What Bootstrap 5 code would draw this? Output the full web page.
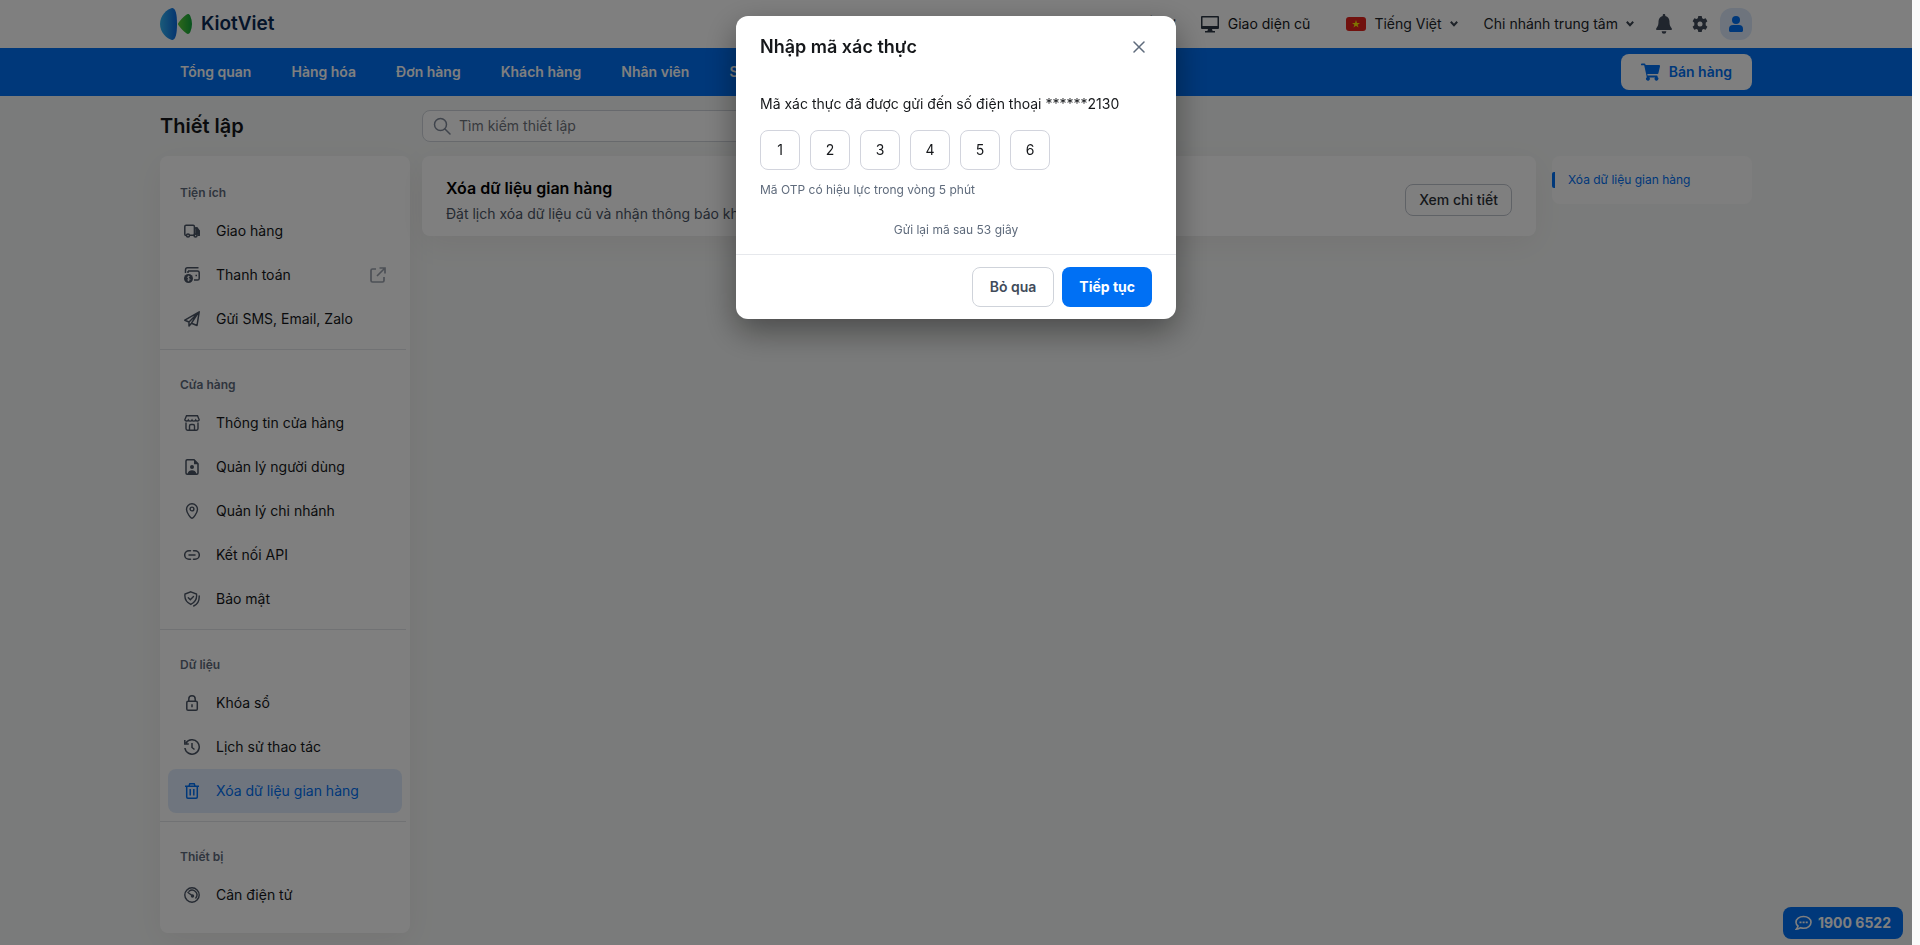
<!DOCTYPE html>
<html lang="vi">
<head>
<meta charset="utf-8">
<meta name="viewport" content="width=device-width, initial-scale=1">
<title>KiotViet - Thiết lập</title>
<link href="https://cdn.jsdelivr.net/npm/bootstrap@5.3.0/dist/css/bootstrap.min.css" rel="stylesheet">
<style>
:root{--kv-blue:#0070f4;--kv-text:#15171a;--kv-muted:#5f6b7c;--kv-line:#cfd3da;--kv-track:8px}
html{background:#fafafa}
body{font-family:Inter,"Noto Sans",sans-serif;font-size:14px;line-height:20px;color:var(--kv-text);background:#f5f7f6;margin-right:var(--kv-track);min-height:100vh}
a{text-decoration:none;color:inherit}
button{color:inherit}
svg{flex:none;display:block}
.kv-wrap{max-width:1592px;margin:0 auto}
.kv-top{background:#fff;height:48px}
.kv-brand{font-size:19px;font-weight:600;color:#0b2b55}
.kv-pick{font-size:14px;line-height:20px;padding:0;border:0}
.kv-help{margin-right:24px}
.kv-old{margin-right:36px}
.kv-lang{margin-right:26px}
.kv-bell{margin-left:22px}
.kv-user{width:32px;height:32px;border-radius:12px;background:#dce9fb;color:var(--kv-blue)}
.kv-nav{background:var(--kv-blue);height:48px}
.kv-nav .nav-link{padding:14px 20px;color:#fff;font-weight:600;line-height:20px}
.kv-sell{height:36px;padding:0 20px;border-radius:8px;background:#fff;color:var(--kv-blue);font-weight:600;border:0}
.kv-side{width:250px}
.kv-title{font-size:20px;line-height:32px;font-weight:600;margin:0}
.kv-head{gap:12px;padding:14px 0}
.kv-search{height:32px;width:400px;border:1px solid var(--kv-line);border-radius:8px;background:#fff;padding:0 10px;color:#7f8898}
.kv-search input{border:0;outline:0;background:none;font-size:14px;color:inherit}
.kv-search input::placeholder{color:#6f747c;opacity:1}
.kv-panel{background:#fff;border-radius:8px;box-shadow:0 8px 32px rgba(60,20,20,.06)}
.kv-menu{padding:2px 0 8px}
.kv-group{padding-bottom:8px;margin-right:4px}
.kv-group + .kv-group{border-top:1px solid #e2e4e8}
.kv-group h2{font-size:12px;line-height:20px;font-weight:600;color:var(--kv-muted);margin:0;padding:25px 20px 6px}
.kv-item{height:44px;margin:0 4px 0 8px;padding:0 15px 0 16px;gap:16px;border-radius:8px}
.kv-item > svg:first-child{color:#4a5464}
.kv-item.active{background:#dfebfc;color:var(--kv-blue)}
.kv-item.active > svg:first-child{color:var(--kv-blue)}
.kv-card h2{font-size:16px;line-height:24px;font-weight:600;margin:0;color:#000}
.kv-card p{margin:4px 0 0;color:#4a5464}
.kv-card{padding:20px 24px 10px;min-height:80px;margin:0 16px 0 12px}
.kv-btn{border:1px solid var(--kv-line);border-radius:8px;background:#fff;font-weight:600;color:#414b5a}
.kv-detail{height:32px;padding:0 13px;color:#2b3036;font-weight:500;border-color:#bfc4cd}
.kv-anchor{width:200px;background:#fdfdfd;border-radius:8px;padding:16px 0;font-size:12px;line-height:16px;color:var(--kv-blue)}
.kv-anchor a{border-left:3px solid var(--kv-blue);border-radius:2px 0 0 2px;padding-left:13px;display:block}
.kv-call{right:17px;bottom:6px;height:32px;padding:0 12px;gap:6px;border:0;border-radius:8px;background:var(--kv-blue);color:#fff;font-weight:700}
.kv-shade,.kv-modal{position:fixed;top:0;bottom:0;left:0;right:var(--kv-track);width:auto;height:auto}
.kv-shade{background:rgba(0,0,0,.5);z-index:1050}
.kv-modal{z-index:1055}
.kv-modal .modal-dialog{max-width:440px;margin:16px auto}
.kv-modal .modal-content{border:0;border-radius:12px;color:var(--kv-text);box-shadow:0 12px 32px rgba(0,0,0,.4)}
.kv-modal .modal-header{padding:19px 24px;border:0}
.kv-modal .modal-title{font-size:18px;line-height:24px;font-weight:600}
.kv-x{width:26px;height:24px;color:var(--kv-muted);border:0;background:none}
.kv-modal .modal-body{padding:16px 24px 14px}
.kv-otp{gap:10px;margin:16px 0 10px}
.kv-otp input{width:40px;height:40px;border:1px solid #d2d4dd;border-radius:8px;padding:0 0 2px;text-align:center;font-size:14px;color:var(--kv-text)}
.kv-note{font-size:12px;color:var(--kv-muted);margin:0}
.kv-resend{margin-top:20px}
.kv-modal .modal-footer{padding:12px 24px;gap:8px;border-top:1px solid #e6e8ec}
.kv-modal .modal-footer > *{margin:0;height:40px;padding:0 17px}
.kv-go{border:0;border-radius:8px;background:var(--kv-blue);color:#fff;font-weight:700}
</style>
</head>
<body>
<header class="kv-top">
  <div class="kv-wrap d-flex align-items-center h-100">
    <a href="#" class="d-flex align-items-center gap-2 me-auto">
      <svg width="33" height="32" viewBox="0 0 33 32"><defs><linearGradient id="lb"><stop stop-color="#35b5f2"/><stop offset="1" stop-color="#0a69df"/></linearGradient><linearGradient id="lg"><stop stop-color="#5cd036"/><stop offset="1" stop-color="#0fa43c"/></linearGradient></defs><path d="M12 0c3.500-.3 5 6 5 16s-1.500 16.300-5 16C7 31 0 24.500 0 16S7 1 12 0Z" fill="url(#lb)"/><path d="M18.300 15c2.200-3.200 5-6.300 8-8.300 1.500-1 3-.8 4 1.300 2.300 5 2.300 11 0 16-1 2.100-2.500 2.300-4 1.300-3-2-5.800-5.100-8-8.300-.5-.7-.5-1.300 0-2Z" fill="url(#lg)"/></svg>
      <span class="kv-brand">KiotViet</span>
    </a>
    <a href="#" class="kv-help">Hỗ trợ</a>
    <a href="#" class="kv-old d-flex align-items-center gap-2"><svg width="20" height="18" viewBox="0 0 20 18" fill="#2c3744"><path d="M2 1h16a1 1 0 0 1 1 1v11a1 1 0 0 1-1 1H2a1 1 0 0 1-1-1V2a1 1 0 0 1 1-1Zm.500 1.500v8.500h15V2.500z" fill-rule="evenodd"/><path d="M8 14h4l.6 2H15v1.500H5V16h2.400z"/></svg>Giao diện cũ</a>
    <button class="btn kv-pick kv-lang d-flex align-items-center gap-2"><svg width="20" height="14" viewBox="0 0 20 14"><rect width="20" height="14" rx="3" fill="#e2231d"/><path d="m10 3 1 2.900h3l-2.400 1.800.9 2.900L10 8.800l-2.500 1.800.9-2.900L6 5.900h3z" fill="#ffea00"/></svg>Tiếng Việt<svg width="8" height="6" viewBox="0 0 8 6" fill="none" stroke="#3b4450" stroke-width="2"><path d="m.8.8 3.200 3.400L7.200.8"/></svg></button>
    <button class="btn kv-pick d-flex align-items-center gap-2">Chi nhánh trung tâm<svg width="8" height="6" viewBox="0 0 8 6" fill="none" stroke="#3b4450" stroke-width="2"><path d="m.8.8 3.200 3.400L7.200.8"/></svg></button>
    <button class="btn kv-bell p-0 border-0" aria-label="Thông báo"><svg width="16" height="20" viewBox="0 0 16 20" fill="#414b5a"><path d="M8 0c.8 0 1.300.5 1.300 1.300v.6C12 2.500 13.500 4.800 13.500 7.500c0 4 1 5 2 6.500.9 1.300.5 2-.5 2H1c-1 0-1.400-.7-.5-2 1-1.500 2-2.500 2-6.500C2.500 4.800 4 2.500 6.700 1.900v-.6C6.700.5 7.200 0 8 0ZM5.700 17.300h4.600A2.300 2.300 0 0 1 8 19.700a2.300 2.300 0 0 1-2.300-2.400Z"/></svg></button>
    <button class="btn p-0 border-0 ms-3 me-2 px-1" aria-label="Thiết lập"><svg width="16" height="16" viewBox="0 0 16 16"><path fill="#414b5a" d="M6.300 0h3.400l.5 2.300 1.300.8 2.200-.8 1.700 3-1.700 1.500v2.400l1.700 1.500-1.700 3-2.200-.8-1.300.8-.5 2.300H6.300l-.5-2.300-1.300-.8-2.200.8-1.700-3 1.700-1.500V6.800L.6 5.300l1.700-3 2.200.8 1.300-.8z"/><circle cx="8" cy="8" r="2.500" fill="#fff"/></svg></button>
    <button class="kv-user border-0 p-0 d-flex align-items-center justify-content-center" aria-label="Tài khoản"><svg width="14" height="16" viewBox="0 0 14 16" fill="currentColor"><circle cx="7" cy="4" r="4"/><path d="M4 9h6a4 4 0 0 1 4 4v1.500c0 .9-.6 1.500-1.500 1.500h-11C.6 16 0 15.400 0 14.500V13a4 4 0 0 1 4-4Z"/></svg></button>
  </div>
</header>
<nav class="kv-nav">
  <div class="kv-wrap d-flex align-items-center justify-content-between">
    <div class="nav flex-nowrap">
      <a class="nav-link" href="#">Tổng quan</a><a class="nav-link" href="#">Hàng hóa</a><a class="nav-link" href="#">Đơn hàng</a><a class="nav-link" href="#">Khách hàng</a><a class="nav-link" href="#">Nhân viên</a><a class="nav-link" href="#">Sổ quỹ</a>
    </div>
    <button class="kv-sell d-flex align-items-center gap-2"><svg width="20" height="18" viewBox="0 0 20 18" fill="currentColor"><path d="M.8.500h2.700c.5 0 .8.200.9.700l.2.900h13.500c.7 0 1 .5.900 1.100l-1.600 7c-.1.500-.4.700-.9.700H6.300l.3 1.600h9.200c.6 0 .9.400.8.900l-.1.700a1.900 1.900 0 1 1-2.400.3H8.300a1.900 1.900 0 1 1-2.500-.2L3.200 2.300H.8A.7.700 0 0 1 0 1.600v-.4C0 .8.300.5.800.5Z"/></svg>Bán hàng</button>
  </div>
</nav>
<main class="kv-wrap">
  <div class="kv-head d-flex">
    <h1 class="kv-title kv-side">Thiết lập</h1>
    <label class="kv-search d-flex align-items-center gap-2"><svg width="18" height="18" viewBox="0 0 18 18" fill="none" stroke="currentColor" stroke-width="1.500" stroke-linecap="round"><circle cx="7.500" cy="7.500" r="6"/><path d="m12 12 5 5"/></svg><input type="text" class="flex-grow-1 p-0" placeholder="Tìm kiếm thiết lập" aria-label="Tìm kiếm thiết lập"></label>
  </div>
  <div class="d-flex align-items-start">
    <aside class="kv-side kv-panel kv-menu flex-shrink-0">
      <section class="kv-group">
        <h2>Tiện ích</h2>
        <a class="kv-item d-flex align-items-center" href="#"><svg width="16" height="16" viewBox="0 0 16 16" fill="none" stroke="currentColor" stroke-width="1.500"><path d="M2 12.500c-.8 0-1.200-.5-1.200-1.200V3.500c0-.9.500-1.300 1.300-1.300h7c.8 0 1.300.5 1.300 1.300v8.800H5.800"/><circle cx="4" cy="12.600" r="1.500"/><circle cx="11.500" cy="12.600" r="1.500"/><path d="M10.400 5h2.400l2.400 3v4.300h-1.800"/><path d="M12 5h1l2.500 3.500V11H12z" fill="currentColor"/></svg>Giao hàng</a>
        <a class="kv-item d-flex align-items-center" href="#"><svg width="16" height="16" viewBox="0 0 16 16" fill="none" stroke="currentColor" stroke-width="1.500"><path d="M1.500 6V3C1.500 1.500 2 .8 3.500.8h11M4 4h9.500c1 0 1.700.6 1.700 1.600v5.800c0 1-.7 1.600-1.700 1.600H10M4 4v2M11.500 8.500h1.500"/><circle cx="4.500" cy="11.500" r="4.500" fill="currentColor" stroke="none"/><path d="M5.900 9.900c-.5-.7-2.500-.7-2.500.4s2.500.9 2.500 2.100-2.200 1.100-2.800.2M4.500 8.700v5.600" stroke="#fff" stroke-width=".8"/></svg>Thanh toán<svg class="ms-auto" width="18" height="18" viewBox="0 0 18 18" fill="none" stroke="#9aa1ad" stroke-width="1.700"><path d="M7 3H3.500C2.500 3 2 3.500 2 4.500v10c0 1 .5 1.500 1.500 1.500h10c1 0 1.500-.5 1.500-1.500V11M10.500 2H16v5.500M16 2 8 10"/></svg></a>
        <a class="kv-item d-flex align-items-center" href="#"><svg width="16" height="16" viewBox="0 0 16 16" fill="none" stroke="currentColor" stroke-width="1.500" stroke-linejoin="round"><path d="M15.200.8.800 9.200 5 11v4l2.500-2.800L13 14.500zM5 11l9-9-6.500 10.200"/></svg>Gửi SMS, Email, Zalo</a>
      </section>
      <section class="kv-group">
        <h2>Cửa hàng</h2>
        <a class="kv-item d-flex align-items-center" href="#"><svg width="16" height="16" viewBox="0 0 16 16" fill="none" stroke="currentColor" stroke-width="1.400"><path d="M2.500.8h11l1.700 4c0 1.400-2.800 1.700-3.500.3-.8 1.400-3 1.400-3.700 0-.8 1.400-3 1.400-3.700 0C3.600 6.500.8 6.200.8 4.800zM2 7.500v6c0 1 .6 1.700 1.600 1.700h8.800c1 0 1.600-.7 1.600-1.700v-6M5.500 15v-4c0-.9.500-1.500 1.400-1.500h2.200c.9 0 1.400.6 1.400 1.500v4"/></svg>Thông tin cửa hàng</a>
        <a class="kv-item d-flex align-items-center" href="#"><svg width="16" height="16" viewBox="0 0 16 16" fill="none" stroke="currentColor" stroke-width="1.500"><path d="M10 .8H3.200c-.8 0-1.200.4-1.200 1.200v12c0 .8.400 1.200 1.200 1.200h9.600c.8 0 1.200-.4 1.200-1.200V4.800z"/><path d="M10 .5v4.800h4.300z" fill="currentColor" stroke="none"/><circle cx="8" cy="8" r="2" fill="currentColor" stroke="none"/><path d="M3.500 15c.5-3 2.500-3.800 4.500-3.800s4 .8 4.500 3.800z" fill="currentColor" stroke="none"/></svg>Quản lý người dùng</a>
        <a class="kv-item d-flex align-items-center" href="#"><svg width="16" height="16" viewBox="0 0 16 16" fill="none" stroke="currentColor" stroke-width="1.400"><path d="M8 15.300c-.8 0-5.500-5-5.500-9a5.500 5.500 0 0 1 11 0c0 4-4.700 9-5.500 9Z"/><circle cx="8" cy="6" r="1.900"/></svg>Quản lý chi nhánh</a>
        <a class="kv-item d-flex align-items-center" href="#"><svg width="16" height="16" viewBox="0 0 16 16" fill="none" stroke="currentColor" stroke-width="1.500" stroke-linecap="round"><path d="M6.500 3.700H5a4.300 4.300 0 0 0 0 8.600h1.500M9.500 3.700H11a4.300 4.300 0 0 1 0 8.600H9.500M5 8h6"/></svg>Kết nối API</a>
        <a class="kv-item d-flex align-items-center" href="#"><svg width="16" height="16" viewBox="0 0 16 16" fill="none" stroke="currentColor" stroke-width="1.400" stroke-linecap="round"><path d="M6.800.8 12.500 3c.5 3.700-.5 8-5.700 10.400C1.500 11 .5 6.700 1 3zM4.300 6.800l2 2 3.200-3.300M15.200 5c.2 4.500-1.500 8.300-5.500 10"/></svg>Bảo mật</a>
      </section>
      <section class="kv-group">
        <h2>Dữ liệu</h2>
        <a class="kv-item d-flex align-items-center" href="#"><svg width="16" height="16" viewBox="0 0 16 16" fill="none" stroke="currentColor" stroke-width="1.500"><rect x="2.800" y="6.200" width="10.500" height="9" rx="1.300"/><path d="M4.800 6V4a3.200 3.200 0 0 1 6.400 0v2M8 9.200v3"/></svg>Khóa sổ</a>
        <a class="kv-item d-flex align-items-center" href="#"><svg width="16" height="16" viewBox="0 0 16 16" fill="none" stroke="currentColor" stroke-width="1.500"><path d="M.9 9A7.200 7.200 0 1 0 2 4M.8 1v4h4M8 4v4.500l2.500 2"/></svg>Lịch sử thao tác</a>
        <a class="kv-item active d-flex align-items-center" href="#"><svg width="16" height="16" viewBox="0 0 16 16" fill="none" stroke="currentColor" stroke-width="1.500"><path d="M1 3.200h14M5 3l.8-2.200h4.400L11 3M2.700 3.500V14c0 .8.500 1.200 1.200 1.200h8.200c.7 0 1.200-.4 1.200-1.200V3.500M6.200 6v6.500M9.800 6v6.500"/></svg>Xóa dữ liệu gian hàng</a>
      </section>
      <section class="kv-group">
        <h2>Thiết bị</h2>
        <a class="kv-item d-flex align-items-center" href="#"><svg width="16" height="16" viewBox="0 0 16 16" fill="none" stroke="currentColor" stroke-width="1.400"><circle cx="8" cy="8" r="7.200"/><path d="M5 4.300A4.800 4.800 0 0 1 11.800 11M4 5.500l4 3" stroke-linecap="round"/><circle cx="8.500" cy="9" r="1" fill="currentColor"/></svg>Cân điện tử</a>
      </section>
    </aside>
    <section class="kv-panel kv-card flex-grow-1 d-flex justify-content-between">
      <div><h2>Xóa dữ liệu gian hàng</h2><p>Đặt lịch xóa dữ liệu cũ và nhận thông báo khi hoàn tất</p></div>
      <button class="kv-btn kv-detail mt-2">Xem chi tiết</button>
    </section>
    <nav class="kv-anchor flex-shrink-0"><a href="#">Xóa dữ liệu gian hàng</a></nav>
  </div>
</main>
<button class="kv-call position-fixed d-flex align-items-center"><svg width="17" height="16" viewBox="0 0 17 16" fill="none" stroke="currentColor" stroke-width="1.600"><path d="M8.500 1.500c4.200 0 7.500 2.400 7.500 5.800s-3.300 5.900-7.500 5.900c-1 0-2-.2-2.900-.5-1.200.9-2.700 1.500-4.300 1.500.9-1 1.500-2 1.700-3.200C1.600 10 1 8.700 1 7.300c0-3.400 3.300-5.800 7.500-5.800Z"/><path d="M4.500 7.400h2m1.100 0h2m1.100 0h2" stroke-width="1.900"/></svg>1900 6522</button>

<div class="kv-shade"></div>
<div class="modal kv-modal d-block" role="dialog" aria-labelledby="otpTitle">
  <div class="modal-dialog">
    <form class="modal-content" onsubmit="return false">
      <div class="modal-header">
        <h2 class="modal-title" id="otpTitle">Nhập mã xác thực</h2>
        <button type="button" class="kv-x p-0 d-flex align-items-center justify-content-center" aria-label="Đóng"><svg width="12" height="12" viewBox="0 0 12 12" stroke="currentColor" stroke-width="1.500" stroke-linecap="round"><path d="m1 1 10 10M11 1 1 11"/></svg></button>
      </div>
      <div class="modal-body">
        <div>Mã xác thực đã được gửi đến số điện thoại ******2130</div>
        <div class="kv-otp d-flex">
          <input value="1" maxlength="1" aria-label="Số thứ 1"><input value="2" maxlength="1" aria-label="Số thứ 2"><input value="3" maxlength="1" aria-label="Số thứ 3"><input value="4" maxlength="1" aria-label="Số thứ 4"><input value="5" maxlength="1" aria-label="Số thứ 5"><input value="6" maxlength="1" aria-label="Số thứ 6">
        </div>
        <p class="kv-note">Mã OTP có hiệu lực trong vòng 5 phút</p>
        <p class="kv-note kv-resend text-center">Gửi lại mã sau 53 giây</p>
      </div>
      <div class="modal-footer">
        <button type="button" class="kv-btn">Bỏ qua</button>
        <button type="submit" class="kv-go">Tiếp tục</button>
      </div>
    </form>
  </div>
</div>
<script src="https://cdn.jsdelivr.net/npm/bootstrap@5.3.0/dist/js/bootstrap.bundle.min.js"></script>
</body>
</html>
